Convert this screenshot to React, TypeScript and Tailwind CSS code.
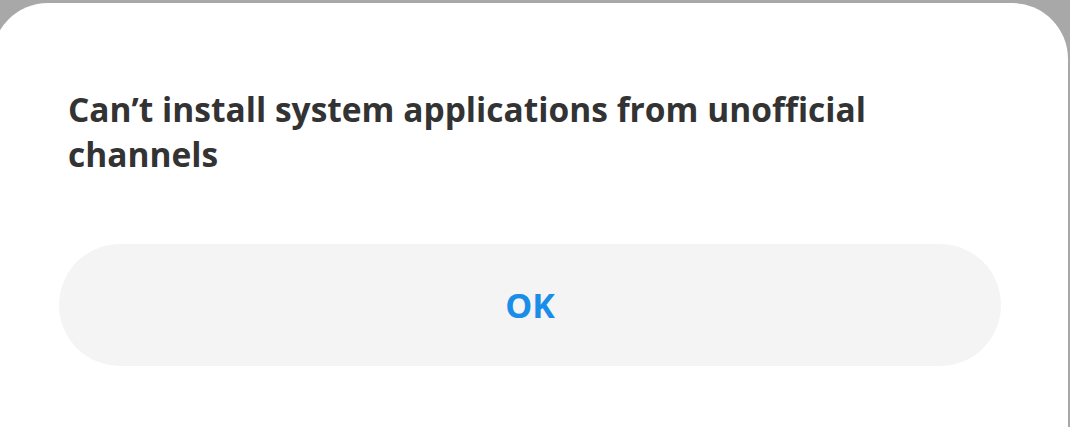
import React from 'react';

const App = () => {
    return (
        <div className="w-[1070px] h-[427px] overflow-hidden bg-[#a8a8a8] pt-[3px]">
            {/* ダイアログ本体 */}
            <div className="-ml-[8px] w-[1076px] h-[440px] bg-white rounded-t-[56px] px-[67px] pt-[84px] font-['Open_Sans',sans-serif]">
                <h1 className="px-[9px] max-w-[900px] text-[33.5px] leading-[45px] font-bold text-[#333333]">
                    Can&#8217;t install system applications from unofficial channels
                </h1>

                <button className="mt-[67px] w-full h-[122px] rounded-full bg-[#f4f4f4] text-[34px] font-bold text-[#1a8de8]">
                    OK
                </button>
            </div>
        </div>
    );
};

export default App;
